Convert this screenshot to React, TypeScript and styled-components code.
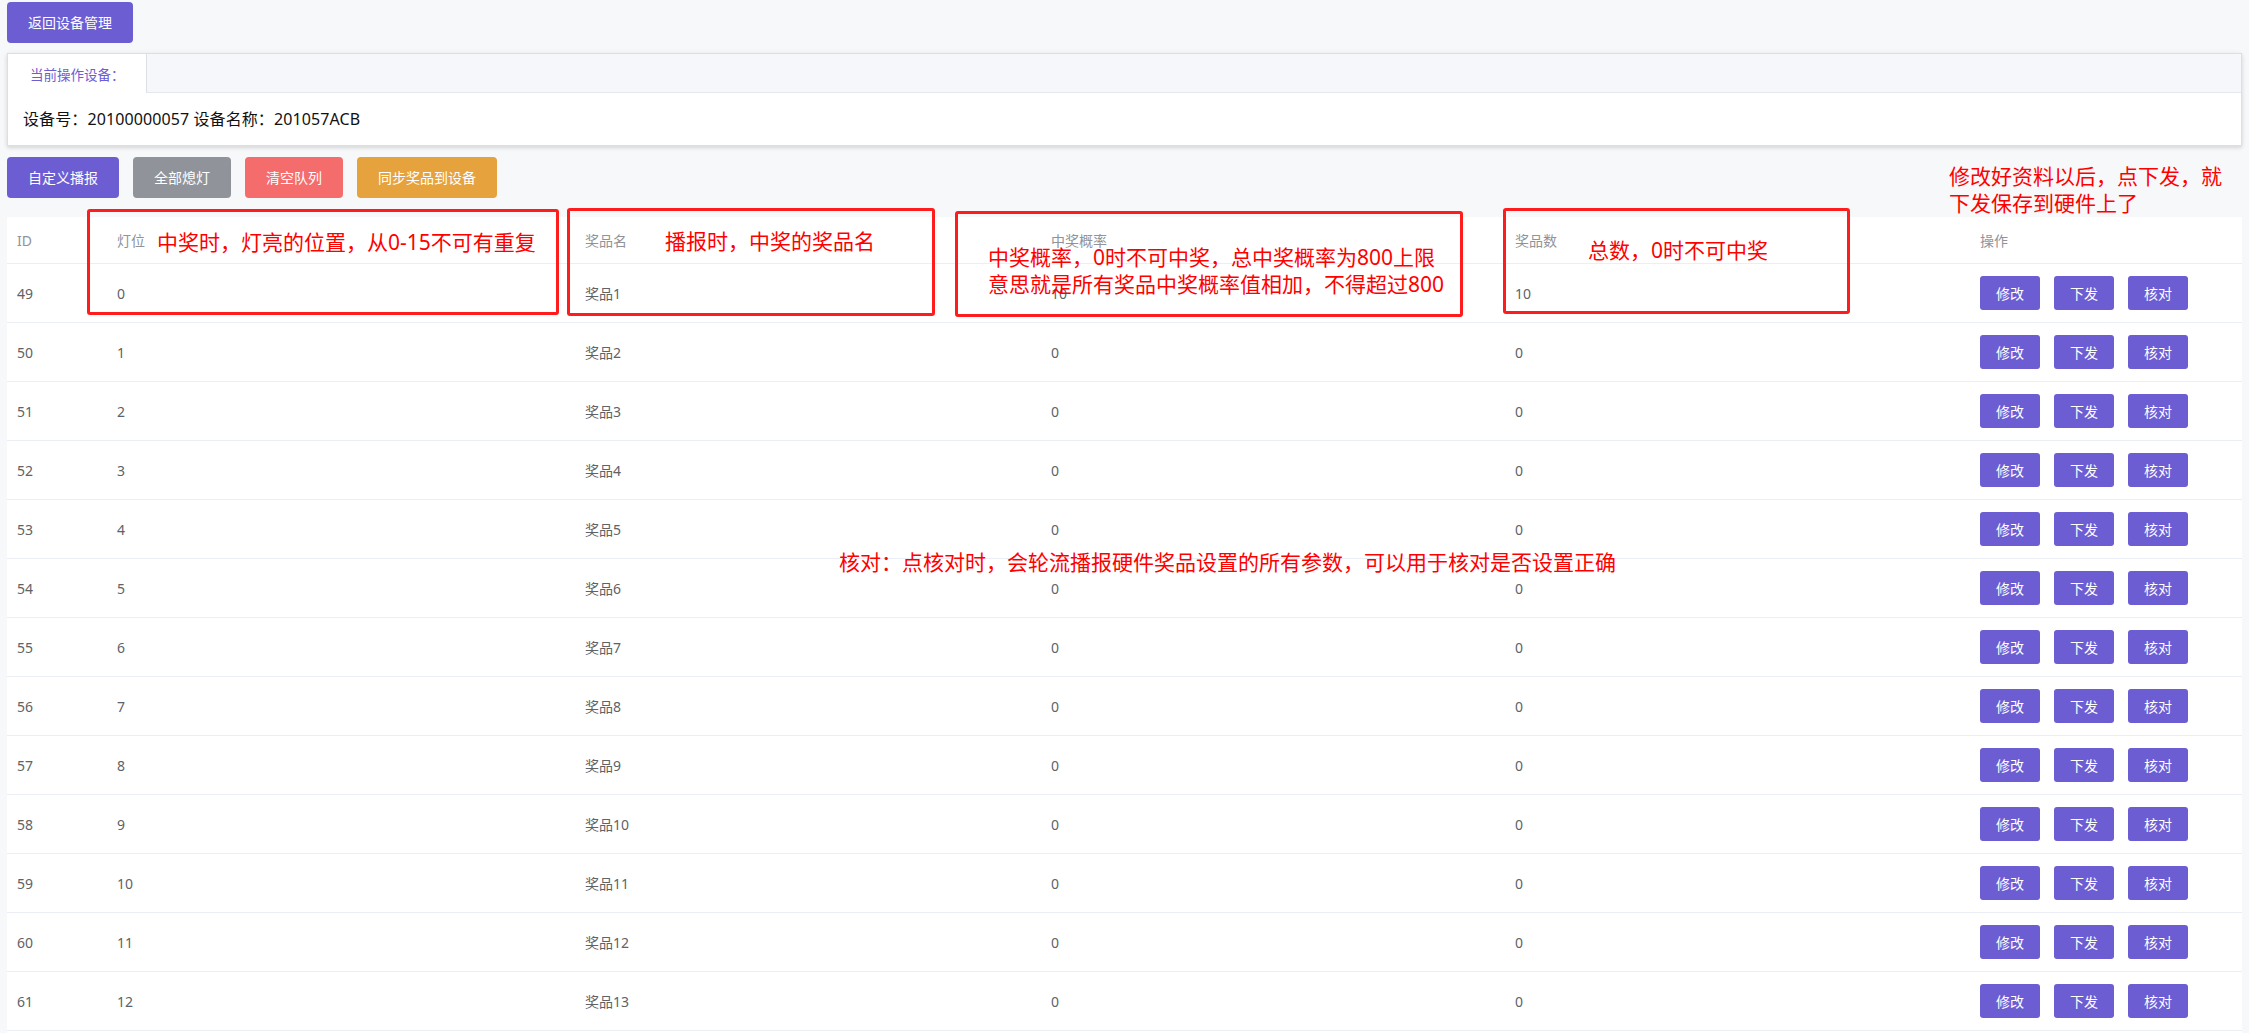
import React from 'react';
import styled, { createGlobalStyle } from 'styled-components';

type Prize = {
  id: number;
  light: number;
  name: string;
  rate: number;
  count: number;
};

const prizes: Prize[] = Array.from({ length: 13 }, (_, i) => ({
  id: 49 + i,
  light: i,
  name: `奖品${i + 1}`,
  rate: i === 0 ? 10 : 0,
  count: i === 0 ? 10 : 0,
}));

const tones: Record<string, string> = {
  primary: '#6c5dd3',
  info: '#909399',
  danger: '#f56c6c',
  warning: '#e6a23c',
};

const App: React.FC = () => {
  return (
    <Page>
      <GlobalStyle />
      <Button $tone="primary">返回设备管理</Button>

      <Card>
        <TabBar>
          <Tab>当前操作设备：</Tab>
        </TabBar>
        <CardBody>设备号：20100000057 设备名称：201057ACB</CardBody>
      </Card>

      <Toolbar>
        <Button $tone="primary">自定义播报</Button>
        <Button $tone="info">全部熄灯</Button>
        <Button $tone="danger">清空队列</Button>
        <Button $tone="warning">同步奖品到设备</Button>
      </Toolbar>

      <Table>
        <HeadRow>
          <HeadCell>ID</HeadCell>
          <HeadCell>灯位</HeadCell>
          <HeadCell>奖品名</HeadCell>
          <HeadCell>中奖概率</HeadCell>
          <HeadCell>奖品数</HeadCell>
          <HeadCell>操作</HeadCell>
        </HeadRow>
        {prizes.map((p) => (
          <Row key={p.id}>
            <Cell>{p.id}</Cell>
            <Cell>{p.light}</Cell>
            <Cell>{p.name}</Cell>
            <Cell>{p.rate}</Cell>
            <Cell>{p.count}</Cell>
            <Cell>
              <Actions>
                <SmallButton>修改</SmallButton>
                <SmallButton>下发</SmallButton>
                <SmallButton>核对</SmallButton>
              </Actions>
            </Cell>
          </Row>
        ))}
      </Table>

      {/* screenshot annotations */}
      <RedBox $x={87} $y={209} $w={472} $h={106} />
      <RedBox $x={567} $y={208} $w={368} $h={108} />
      <RedBox $x={955} $y={211} $w={508} $h={106} />
      <RedBox $x={1503} $y={208} $w={347} $h={106} />

      <Note $x={157} $y={229}>中奖时，灯亮的位置，从0-15不可有重复</Note>
      <Note $x={665} $y={228}>播报时，中奖的奖品名</Note>
      <Note $x={988} $y={244}>
        中奖概率，0时不可中奖，总中奖概率为800上限
        <br />
        意思就是所有奖品中奖概率值相加，不得超过800
      </Note>
      <Note $x={1588} $y={237}>总数，0时不可中奖</Note>
      <Note $x={1949} $y={163}>
        修改好资料以后，点下发，就
        <br />
        下发保存到硬件上了
      </Note>
      <Note $x={839} $y={549}>核对：点核对时，会轮流播报硬件奖品设置的所有参数，可以用于核对是否设置正确</Note>
    </Page>
  );
};

export default App;

const GlobalStyle = createGlobalStyle`
  html, body {
    margin: 0;
    padding: 0;
    background: #f7f8fa;
  }
  body {
    font-family: "Noto Sans", "Noto Sans CJK SC", sans-serif;
  }
  * {
    box-sizing: border-box;
  }
`;

const Page = styled.div`
  position: relative;
  height: 1033px;
  overflow: hidden;
  padding: 2px 7px 0;
  background: #f7f8fa;
`;

const Button = styled.button<{ $tone: string }>`
  height: 41px;
  padding: 0 21px;
  border: none;
  border-radius: 4px;
  background: ${(p) => tones[p.$tone]};
  color: #fff;
  font-family: inherit;
  font-size: 14px;
  line-height: 1;
  cursor: pointer;
`;

const Card = styled.div`
  margin-top: 10px;
  background: #fff;
  border: 1px solid #dcdfe6;
  box-shadow: 0 2px 4px rgba(0, 0, 0, 0.12), 0 0 6px rgba(0, 0, 0, 0.04);
`;

const TabBar = styled.div`
  display: flex;
  height: 39px;
  background: #f5f7fa;
  border-bottom: 1px solid #e4e7ed;
`;

const Tab = styled.div`
  width: 139px;
  height: 39px;
  padding-left: 22px;
  display: flex;
  align-items: center;
  background: #fff;
  border-right: 1px solid #dcdfe6;
  color: #6c5dd3;
  font-size: 13.5px;
`;

const CardBody = styled.div`
  padding: 15px 15px;
  line-height: 22px;
  font-size: 16px;
  letter-spacing: 0.1px;
  color: #111;
`;

const Toolbar = styled.div`
  display: flex;
  gap: 14px;
  margin-top: 11px;
`;

const Table = styled.div`
  margin-top: 19px;
  padding-bottom: 40px;
  background: #fff;
`;

const cols = '100px 468px 466px 464px 465px 1fr';

const HeadRow = styled.div`
  display: grid;
  grid-template-columns: ${cols};
  height: 47px;
  border-bottom: 1px solid #ebeef5;
`;

const HeadCell = styled.div`
  display: flex;
  align-items: center;
  padding-left: 10px;
  color: #909399;
  font-size: 14px;
`;

const Row = styled.div`
  display: grid;
  grid-template-columns: ${cols};
  height: 59px;
  border-bottom: 1px solid #ebeef5;
`;

const Cell = styled.div`
  display: flex;
  align-items: center;
  padding-left: 10px;
  color: #606266;
  font-size: 14px;
`;

const Actions = styled.div`
  display: flex;
  gap: 14px;
`;

const SmallButton = styled.button`
  width: 60px;
  height: 34px;
  border: none;
  border-radius: 3px;
  background: #6c5dd3;
  color: #fff;
  font-family: inherit;
  font-size: 14px;
  cursor: pointer;
`;

const RedBox = styled.div<{ $x: number; $y: number; $w: number; $h: number }>`
  position: absolute;
  left: ${(p) => p.$x}px;
  top: ${(p) => p.$y}px;
  width: ${(p) => p.$w}px;
  height: ${(p) => p.$h}px;
  border: 3px solid #ff1c1c;
  border-radius: 3px;
  pointer-events: none;
`;

const Note = styled.div<{ $x: number; $y: number }>`
  position: absolute;
  left: ${(p) => p.$x}px;
  top: ${(p) => p.$y}px;
  color: #ff0000;
  font-size: 21px;
  line-height: 27px;
  white-space: nowrap;
  pointer-events: none;
`;
